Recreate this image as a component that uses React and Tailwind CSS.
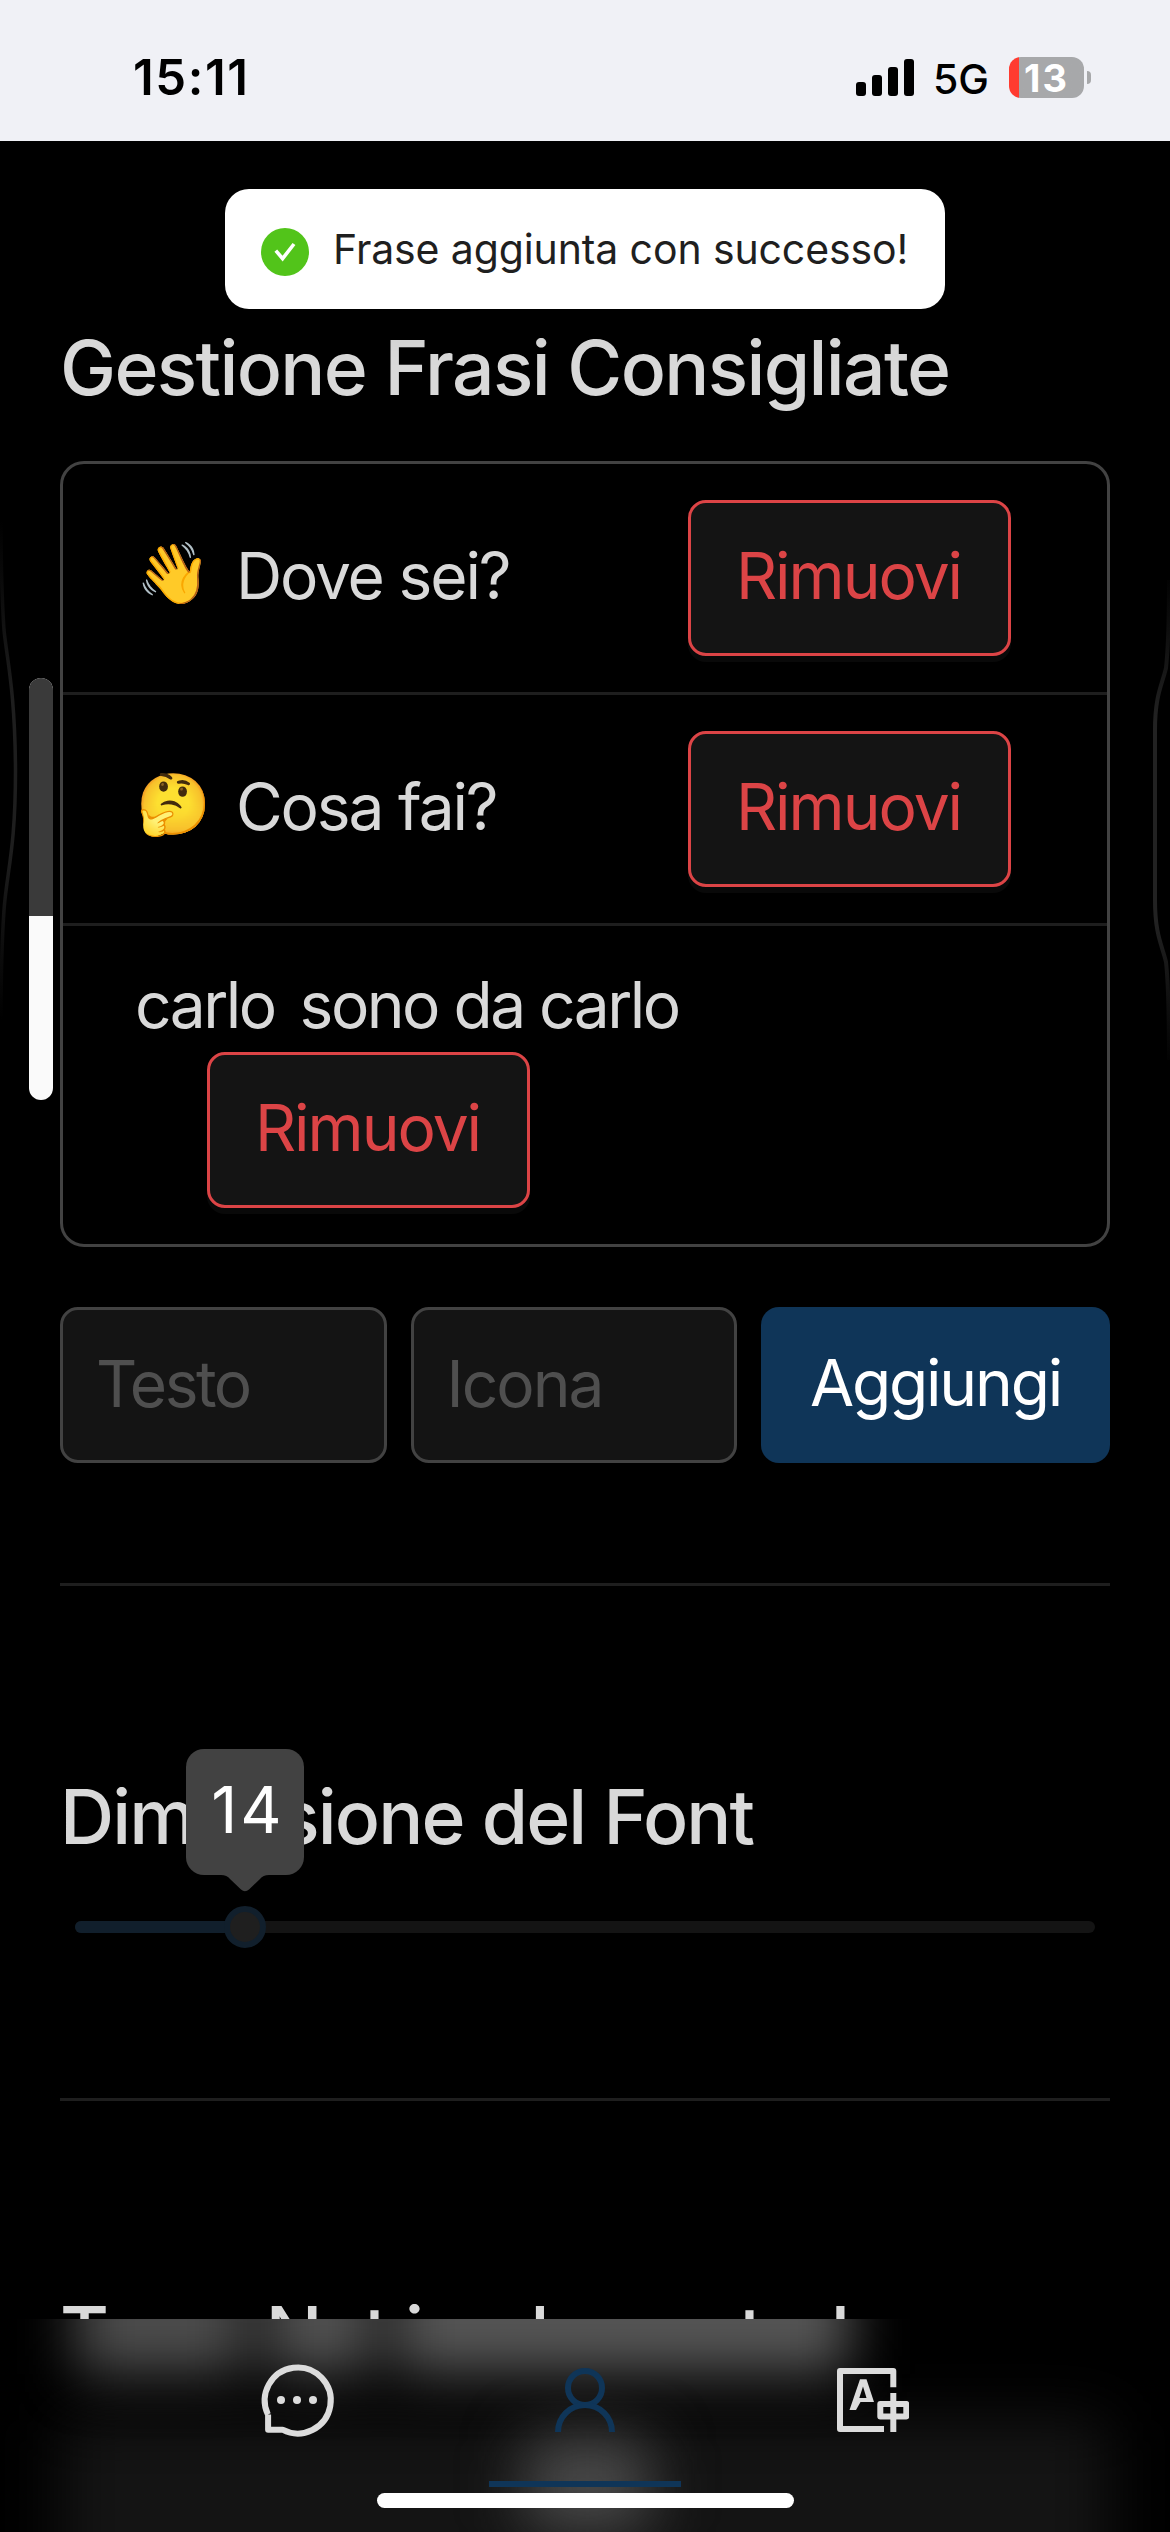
import React from "react";

const FONT = "font-['Inter','Noto_Color_Emoji',sans-serif]";

function StatusBar() {
  return (
    <header className="flex h-[141px] items-start bg-[#f0f1f6] pl-[133px] pr-[79px] text-black">
      <span className="mt-[48px] text-[49px] leading-[60px] font-semibold tracking-[1.6px]">15:11</span>
      <div className="mt-[57px] ml-auto flex items-start">
        <div className="flex h-[39px] items-end gap-[6px]">
          <i className="h-[14px] w-[10px] rounded-[3px] bg-black" />
          <i className="h-[21px] w-[10px] rounded-[3px] bg-black" />
          <i className="h-[29px] w-[10px] rounded-[3px] bg-black" />
          <i className="h-[37px] w-[10px] rounded-[3px] bg-black" />
        </div>
        <span className="ml-[19px] w-[56px] text-[41px] leading-[44px] font-medium">5G</span>
        <div className="ml-[20px] flex h-[41px] items-center gap-[3px]">
          <div className="flex h-[41px] w-[75px] items-center rounded-[12px] bg-linear-to-r from-[#ff3b30] from-[10px] to-[#a7a8aa] to-[10px]">
            <span className="ml-[15px] text-[38px] leading-[48px] font-bold tracking-[2px] text-white">13</span>
          </div>
          <i className="h-[13px] w-[4px] rounded-r-full bg-[#a7a8aa]" />
        </div>
      </div>
    </header>
  );
}

function Toast() {
  return (
    <div className="absolute top-[189px] left-[225px] flex h-[120px] w-[720px] items-center rounded-[24px] bg-white pl-[36px] shadow-[0_18px_48px_rgba(0,0,0,0.08),0_9px_18px_rgba(0,0,0,0.12)]">
      <svg viewBox="0 0 48 48" className="mt-[6px] size-[48px]">
        <circle cx="24" cy="24" r="24" fill="#52c41a" />
        <path d="M14.8 22.6L21.6 30.6L33 16" fill="none" stroke="#fff" strokeWidth="3.6" />
      </svg>
      <span className="ml-[24px] text-[41px] leading-[60px] tracking-[-0.12px] whitespace-nowrap text-[#1f1f1f]">
        Frase aggiunta con successo!
      </span>
    </div>
  );
}

function RemoveButton({ className = "" }) {
  return (
    <button
      className={`flex h-[156px] w-[323px] shrink-0 items-center justify-center rounded-[18px] border-[3px] border-[#dc4446] bg-[#141414] pr-[2px] pb-[4px] text-[64px] tracking-[-2px] text-[#dc4446] shadow-[0_6px_0_#090909] ${className}`}
    >
      Rimuovi
    </button>
  );
}

function EmojiRow({ emoji, text }) {
  return (
    <li className="flex h-[231px] items-center justify-between border-b-[3px] border-[#1e1e1e] pr-[96px] pl-[72px]">
      <div className="flex h-[90px] items-center gap-[24px] pb-[4px] text-[64px]">
        <span className="flex w-[77px] justify-center pb-[8px] text-[60px] leading-[78px]">{emoji}</span>
        <span className="tracking-[-2.15px]">{text}</span>
      </div>
      <RemoveButton />
    </li>
  );
}

function PhraseList() {
  return (
    <ul className="mt-[45px] rounded-[24px] border-[3px] border-[#424242]">
      <EmojiRow emoji="👋" text="Dove sei?" />
      <EmojiRow emoji="🤔" text="Cosa fai?" />
      <li className="h-[318px] py-[36px] pl-[72px]">
        <div className="flex h-[90px] items-center gap-[25px] pb-[4px] text-[64px] tracking-[-2.5px]">
          <span>carlo</span>
          <span>sono da carlo</span>
        </div>
        <RemoveButton className="ml-[72px]" />
      </li>
    </ul>
  );
}

function AddForm() {
  return (
    <div className="mt-[60px] flex gap-[24px]">
      <input
        placeholder="Testo"
        className="h-[156px] min-w-0 flex-1 rounded-[18px] border-[3px] border-[#424242] bg-[#141414] px-[33px] pb-[3px] text-[64px] tracking-[-2.5px] placeholder:text-[#4f4f4f]"
      />
      <input
        placeholder="Icona"
        className="h-[156px] min-w-0 flex-1 rounded-[18px] border-[3px] border-[#424242] bg-[#141414] px-[33px] pb-[3px] text-[64px] tracking-[-2px] placeholder:text-[#4f4f4f]"
      />
      <button className="h-[156px] w-[349px] rounded-[18px] bg-[#0f3558] pb-[4px] text-[64px] tracking-[-2.2px] text-white">
        Aggiungi
      </button>
    </div>
  );
}

function FontSlider() {
  return (
    <div className="mx-[15px] mt-[56px] h-[12px] rounded-[6px] bg-[#141414]">
      <div className="relative h-full w-[170px] rounded-[6px] bg-[#111f2c]">
        <div className="absolute top-[-15px] right-[-21px] size-[42px] rounded-full border-[6px] border-[#111f2c] bg-[#1f1f1f]" />
        <div className="absolute right-[-59px] bottom-[58px] flex h-[126px] w-[118px] items-center justify-center rounded-[18px] bg-[#424242] pb-[4px] pl-[6px] text-[64px] tracking-[3px] text-white">
          14
          <svg viewBox="0 0 48 18" className="absolute top-[125px] left-[35px] h-[18px] w-[48px]">
            <path d="M0 0V1Q6 1 9 5L20 15.5Q24 19 28 15.5L39 5Q42 1 48 1V0Z" fill="#424242" />
          </svg>
        </div>
      </div>
    </div>
  );
}

function EdgeLines() {
  return (
    <>
      <svg viewBox="0 0 24 500" className="absolute top-[520px] left-0 h-[500px] w-[24px]">
        <defs>
          <linearGradient id="edgeL" x1="0" y1="0" x2="0" y2="500" gradientUnits="userSpaceOnUse">
            <stop offset="0" stopColor="#1e1e1e" stopOpacity="0" />
            <stop offset="0.36" stopColor="#1e1e1e" />
            <stop offset="0.66" stopColor="#1e1e1e" />
            <stop offset="1" stopColor="#1e1e1e" stopOpacity="0" />
          </linearGradient>
        </defs>
        <path d="M1 0C1 60 2 80 4 110C7 140 15 170 15.500 250C15.500 330 7 350 4 390C2 420 1 440 1 500" fill="none" stroke="url(#edgeL)" strokeWidth="3.500" />
      </svg>
      <svg viewBox="0 0 24 500" className="absolute top-[570px] right-0 h-[500px] w-[24px]">
        <defs>
          <linearGradient id="edgeR" x1="0" y1="0" x2="0" y2="500" gradientUnits="userSpaceOnUse">
            <stop offset="0" stopColor="#222" stopOpacity="0" />
            <stop offset="0.3" stopColor="#222" />
            <stop offset="0.7" stopColor="#222" />
            <stop offset="1" stopColor="#222" stopOpacity="0" />
          </linearGradient>
        </defs>
        <path d="M23 10C23 60 22 80 20 98C16 115 9 125 9 160V330C9 365 16 375 20 392C22 410 23 430 23 490" fill="none" stroke="url(#edgeR)" strokeWidth="4" />
      </svg>
    </>
  );
}

function ChatIcon() {
  return (
    <svg viewBox="0 0 72 72" className="size-[72px] overflow-visible" fill="none" stroke="#dcdcdc" strokeWidth="6">
      <path d="M6.900 50.500A33 33 0 1 1 21.500 65.700H7.100V50.500" strokeLinejoin="round" />
      <g fill="#dcdcdc" stroke="none">
        <circle cx="20" cy="36" r="4" />
        <circle cx="36" cy="36" r="4" />
        <circle cx="52" cy="36" r="4" />
      </g>
    </svg>
  );
}

function UserIcon() {
  return (
    <svg viewBox="0 0 72 72" className="size-[72px]" fill="none" stroke="#0f3558" strokeWidth="6">
      <circle cx="36" cy="24" r="17" />
      <path d="M9 68a27 27 0 0 1 54 0" />
    </svg>
  );
}

function TranslateIcon() {
  return (
    <svg viewBox="0 0 72 72" className="size-[72px]" fill="none" stroke="#dcdcdc" strokeWidth="6">
      <path d="M56.300 23.300V7H3V65H47" strokeLinejoin="round" />
      <path d="M56.300 29V68" />
      <rect x="43.300" y="40" width="26" height="12.500" strokeLinejoin="round" />
      <path
        d="M23 15.300H29.500L37 38H23.500L19 46H12.500ZM26 22.500L22.300 34H29.500Z"
        fill="#dcdcdc"
        fillRule="evenodd"
        stroke="none"
      />
    </svg>
  );
}

/* Frosted backdrop of the tab bar: soft glow of the content scrolled behind it. */
function FrostedBackdrop() {
  return (
    <div className="absolute inset-0 overflow-hidden bg-black">
      <div className="absolute top-[100px] right-[60px] left-[60px] h-[260px] rounded-[18px] bg-[#141414] blur-[30px]" />
      <div className="absolute top-[118px] left-[525px] h-[95px] w-[125px] rounded-[18px] bg-[#4a4a4a] blur-[30px]" />
      <div className="absolute top-[-55px] left-[76px] flex h-[110px] gap-[22px] blur-[27px]">
        <div className="w-[170px] bg-[#4c4c4c]" />
        <div className="w-[105px] bg-[#525252]" />
        <div className="w-[455px] bg-[#555555]" />
      </div>
    </div>
  );
}

function TabBar() {
  return (
    <nav className="absolute inset-x-0 bottom-0 h-[213px]">
      <FrostedBackdrop />
      <div className="relative flex flex-col items-center">
        <div className="flex gap-[96px]">
          <a className="flex h-[168px] w-[192px] justify-center pt-[45px]">
            <ChatIcon />
          </a>
          <a className="flex h-[168px] w-[192px] justify-center border-b-[6px] border-[#0f3558] pt-[45px]">
            <UserIcon />
          </a>
          <a className="flex h-[168px] w-[192px] justify-center pt-[45px]">
            <TranslateIcon />
          </a>
        </div>
        <div className="mt-[6px] h-[15px] w-[417px] rounded-full bg-white" />
      </div>
    </nav>
  );
}

export default function App() {
  return (
    <div className={`relative h-[2532px] w-[1170px] overflow-hidden bg-black text-[#d9d9d9] ${FONT}`}>
      <StatusBar />
      <main className="px-[60px] pt-[179px]">
        <h2 className="text-[75px] leading-[96px] font-medium tracking-[-1.66px] whitespace-nowrap">
          Gestione Frasi Consigliate
        </h2>
        <PhraseList />
        <AddForm />
        <hr className="mt-[120px] h-[3px] border-0 bg-[#1e1e1e]" />
        <h2 className="mt-[183px] text-[75px] leading-[96px] font-medium tracking-[-1.9px] whitespace-nowrap">
          Dimensione del Font
        </h2>
        <FontSlider />
        <hr className="mt-[165px] h-[3px] border-0 bg-[#1e1e1e]" />
        <h2 className="mt-[185px] text-[75px] leading-[96px] font-medium tracking-[-2.1px] whitespace-nowrap">
          Tema Not implemented
        </h2>
      </main>
      <EdgeLines />
      <div className="absolute top-[678px] left-[29px] h-[422px] w-[24px] overflow-hidden rounded-[12px] bg-[#fafafa]">
        <div className="h-[238px] bg-[#3a3a3a]" />
      </div>
      <Toast />
      <TabBar />
    </div>
  );
}
